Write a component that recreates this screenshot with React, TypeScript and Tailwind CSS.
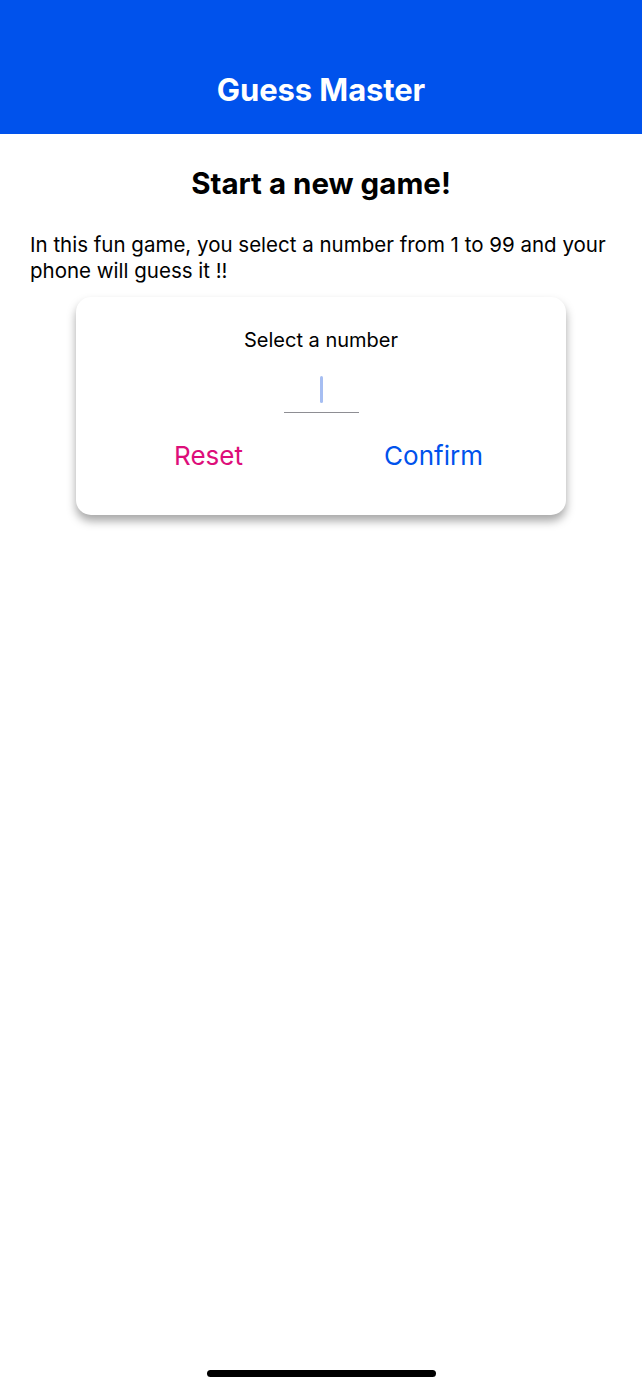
import { useState } from 'react';

export default function App() {
  const [value, setValue] = useState('');

  return (
    <div
      className="min-h-[1389px] bg-white flex flex-col relative"
      style={{ fontFamily: 'Inter, "Noto Sans", sans-serif' }}
    >
      {/* Header */}
      <header className="h-[134px] bg-[#0052ec] flex items-end justify-center pb-[21px]">
        <h1 className="text-[31px] font-bold text-white tracking-[-0.1px]">Guess Master</h1>
      </header>

      {/* Body */}
      <main className="px-[30px] pt-[29px] flex flex-col items-center">
        <h2 className="text-[29.5px] font-bold text-black leading-[40px]">Start a new game!</h2>
        <p className="self-stretch mt-[29px] text-[20.5px] leading-[26px] text-black">
          In this fun game, you select a number from 1 to 99 and your phone will guess it !!
        </p>

        {/* Card */}
        <div className="mt-[13px] w-[490px] h-[218px] bg-white rounded-[15px] shadow-[0_6px_10px_rgba(0,0,0,0.35)] px-[20px] pt-[30px] flex flex-col items-center">
          <span className="text-[20px] leading-[26px] text-black">Select a number</span>
          <div className="relative mt-[20px]">
            <input
              value={value}
              onChange={(e) => setValue(e.target.value)}
              className="w-[75px] h-[40px] border-b-[1.5px] border-[#8e8e93] text-center text-[24px] outline-none caret-[#a0b8f0]"
            />
            {value === '' && (
              <span className="absolute left-[36px] top-[3px] w-[3px] h-[27px] rounded-full bg-[#a6bef2] pointer-events-none" />
            )}
          </div>
          <div className="mt-[26px] self-stretch grid grid-cols-2">
            <button className="text-center text-[26px] text-[#dd0e7a] leading-[34px]" onClick={() => setValue('')}>
              Reset
            </button>
            <button className="text-center text-[26px] text-[#0052ec] leading-[34px]">Confirm</button>
          </div>
        </div>
      </main>

      {/* Home indicator */}
      <div className="absolute left-[207px] top-[1370px] w-[229px] h-[7px] rounded-full bg-black" />
    </div>
  );
}
